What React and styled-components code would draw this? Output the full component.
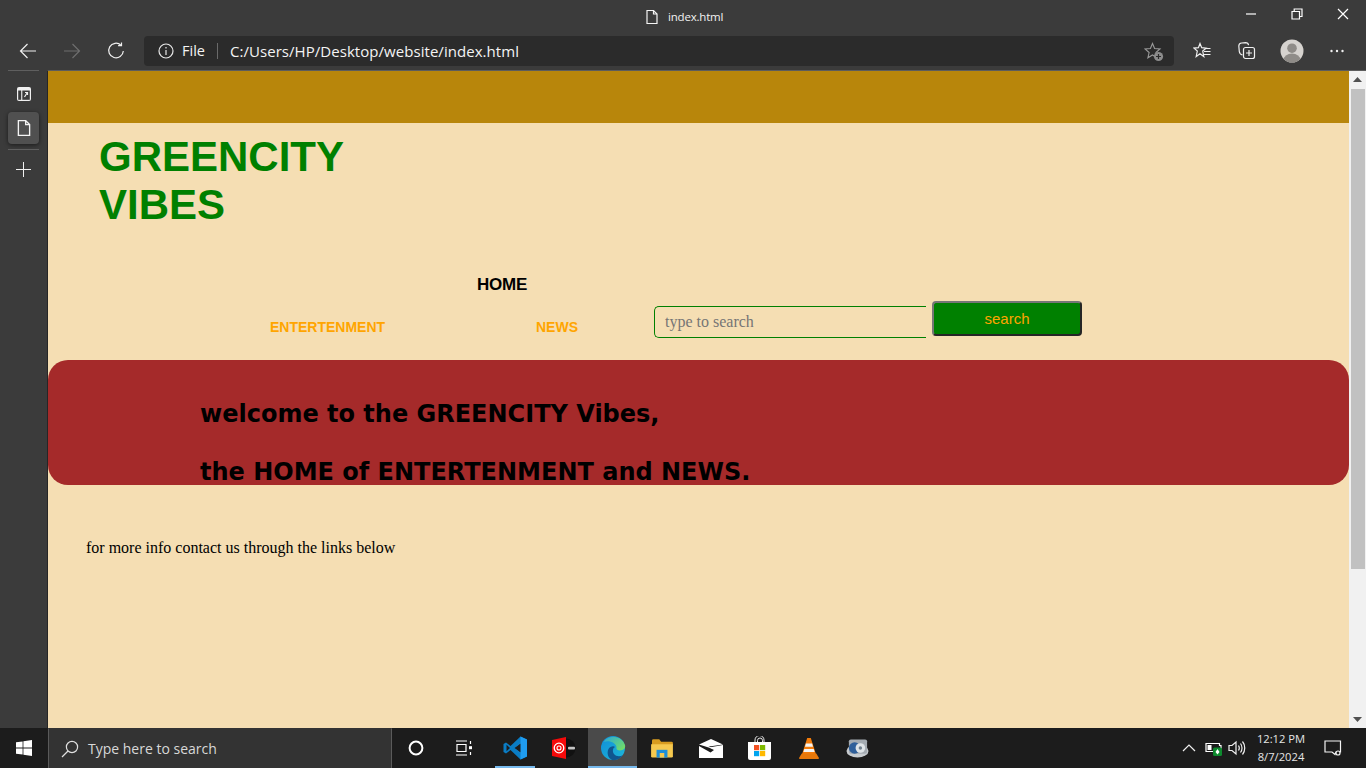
import React from "react";
import styled, { createGlobalStyle } from "styled-components";

const Global = createGlobalStyle`
  html, body { margin: 0; padding: 0; height: 100%; overflow: hidden; }
  #root { height: 100%; }
  * { box-sizing: border-box; }
`;

const Screen = styled.div`
  width: 1366px;
  height: 768px;
  display: flex;
  flex-direction: column;
  background: #3b3b3b;
  font-family: "Open Sans", "Noto Sans", sans-serif;
  color: #fff;
  overflow: hidden;
`;

const TitleBar = styled.div`
  height: 35px;
  flex: none;
  display: flex;
  align-items: center;
  padding-left: 644px;
  background: #3b3b3b;
`;

const TabTitle = styled.div`
  display: flex;
  align-items: center;
  gap: 8px;
  margin-top: -2px;
  font-size: 11.5px;
  letter-spacing: -0.2px;
  color: #f2f2f2;
`;

const WindowButtons = styled.div`
  display: flex;
  margin-left: auto;
  margin-top: -8px;
`;

const WindowButton = styled.div`
  width: 46px;
  height: 27px;
  display: flex;
  align-items: center;
  justify-content: center;
`;

const ToolBar = styled.div`
  height: 35px;
  flex: none;
  display: flex;
  align-items: center;
  padding: 0 0 3px 6px;
`;

const NavIcon = styled.div`
  width: 44px;
  height: 32px;
  display: flex;
  align-items: center;
  justify-content: center;
`;

const AddressBar = styled.div`
  width: 1030px;
  height: 30px;
  margin-left: 6px;
  padding: 0 10px 0 14px;
  display: flex;
  align-items: center;
  border-radius: 4px;
  background: #2b2b2b;
  font-size: 14.5px;
  color: #f4f4f4;
`;

const FileLabel = styled.span`
  margin-left: 8px;
  padding-right: 12px;
  border-right: 1px solid #6a6a6a;
  line-height: 16px;
`;

const Url = styled.span`
  margin-left: 12px;
  font-size: 15px;
  letter-spacing: 0.05px;
`;

const Favorite = styled.div`
  display: flex;
  margin-left: auto;
  margin-top: 2px;
`;

const ToolActions = styled.div`
  display: flex;
  margin-left: 5px;
`;

const ToolAction = styled.div`
  width: 45px;
  height: 30px;
  display: flex;
  align-items: center;
  justify-content: center;
`;

const Middle = styled.div`
  flex: 1;
  min-height: 0;
  display: flex;
`;

const SideBar = styled.div`
  width: 47px;
  flex: none;
  padding: 0 8px;
  display: flex;
  flex-direction: column;
  background: #3b3b3b;
`;

const SideDivider = styled.div`
  width: 31px;
  height: 1px;
  flex: none;
  margin-top: ${(p) => p.$top || 0}px;
  background: #5f5f5f;
`;

const SideButton = styled.div`
  width: 31px;
  height: 32px;
  flex: none;
  margin-top: ${(p) => p.$top}px;
  display: flex;
  align-items: center;
  justify-content: center;
  border-radius: 4px;
  background: ${(p) => (p.$active ? "#505050" : "transparent")};
  box-shadow: ${(p) => (p.$active ? "0 1px 4px rgba(0,0,0,.55)" : "none")};
`;

const Viewport = styled.div`
  flex: 1;
  min-width: 0;
  display: flex;
  border-top: 1px solid #5c5c5c;
  border-left: 1px solid #262626;
`;

const Page = styled.div`
  flex: 1;
  min-width: 0;
  background: #f5deb3;
  color: #000;
  font-family: "Liberation Serif", serif;
  overflow: hidden;
`;

const TopBand = styled.div`
  height: 52px;
  background: #b8860b;
`;

const SiteTitle = styled.h1`
  width: 300px;
  margin: 10px 0 0 51px;
  font-family: "Liberation Sans", Arial, sans-serif;
  font-size: 42px;
  line-height: 48px;
  font-weight: 700;
  color: #008000;
`;

const NavArea = styled.div`
  height: 131px;
  padding-top: 44px;
`;

const HomeLink = styled.div`
  margin-left: 429px;
  height: 24px;
  font-family: "Liberation Sans", Arial, sans-serif;
  font-weight: 700;
  font-size: 17px;
  letter-spacing: -0.2px;
  line-height: 24px;
  color: #000;
`;

const NavRow = styled.div`
  display: flex;
  align-items: flex-start;
  margin-top: 4px;
  padding-left: 222px;
`;

const OrangeLink = styled.div`
  width: ${(p) => p.$w}px;
  margin-top: 18px;
  font-family: "Liberation Sans", Arial, sans-serif;
  font-weight: 700;
  font-size: 14px;
  line-height: 16px;
  color: #ffa500;
`;

const SearchInput = styled.input`
  width: 272px;
  height: 32px;
  margin-top: 5px;
  padding: 0 10px;
  border: 1px solid #008000;
  border-right: none;
  border-radius: 5px 0 0 5px;
  background: transparent;
  font-family: "Liberation Serif", serif;
  font-size: 16px;
  color: #000;
  outline: none;
  &::placeholder { color: #757575; opacity: 1; }
`;

const SearchButton = styled.button`
  width: 150px;
  height: 35px;
  margin-left: 6px;
  padding: 0;
  border: 2px solid;
  border-color: #767676 #262626 #262626 #767676;
  border-radius: 4px;
  background: #008000;
  font-family: "Liberation Sans", Arial, sans-serif;
  font-size: 15px;
  color: #ffa500;
`;

const Banner = styled.div`
  height: 125px;
  padding: 40px 0 0 152px;
  border-radius: 20px;
  background: #a52a2a;
  overflow: hidden;
`;

const BannerLine = styled.h2`
  margin: 0 0 29px;
  height: 29px;
  font-family: "DejaVu Sans", Verdana, sans-serif;
  font-size: 24px;
  line-height: 29px;
  font-weight: 700;
  color: #000;
`;

const InfoText = styled.p`
  margin: 54px 0 0 38px;
  font-size: 16px;
  line-height: 18px;
`;

const ScrollBar = styled.div`
  width: 17px;
  flex: none;
  display: flex;
  flex-direction: column;
  background: #f1f1f1;
`;

const ScrollArrow = styled.div`
  height: 17px;
  flex: none;
  display: flex;
  align-items: center;
  justify-content: center;
`;

const ScrollThumb = styled.div`
  height: 480px;
  margin: 1px 1px 0 2px;
  background: #c1c1c1;
`;

const ScrollSpace = styled.div`
  flex: 1;
`;

const TaskBar = styled.div`
  height: 40px;
  flex: none;
  display: flex;
  align-items: center;
  background: #1c1c1c;
`;

const StartButton = styled.div`
  width: 48px;
  height: 40px;
  display: flex;
  align-items: center;
  justify-content: center;
`;

const SearchBox = styled.div`
  width: 344px;
  height: 40px;
  padding-left: 12px;
  display: flex;
  align-items: center;
  gap: 9px;
  background: #333;
  border: 1px solid #5a5a5a;
  border-bottom: none;
  border-top-color: #333;
  font-size: 14px;
  color: #d8d8d8;
`;

const TaskSlot = styled.div`
  width: 48px;
  height: 40px;
  flex: none;
  display: flex;
  align-items: center;
  justify-content: center;
`;

const AppRow = styled.div`
  display: flex;
  margin-left: 2px;
`;

const AppSlot = styled.div`
  width: 49px;
  height: 40px;
  flex: none;
  display: flex;
  align-items: center;
  justify-content: center;
  background: ${(p) =>
    p.$active
      ? "linear-gradient(#76b9ed, #76b9ed) bottom / 100% 2px no-repeat, #4a4a4a"
      : p.$open
        ? "linear-gradient(#76b9ed, #76b9ed) bottom / 40px 2px no-repeat"
        : "transparent"};
`;

const Tray = styled.div`
  margin-left: auto;
  display: flex;
  align-items: center;
  height: 40px;
`;

const TrayIcon = styled.div`
  width: 24px;
  display: flex;
  justify-content: center;
`;

const Clock = styled.div`
  width: 62px;
  margin: 0 3px 0 1px;
  text-align: center;
  font-size: 11.2px;
  line-height: 18px;
  color: #e6e6e6;
`;

const Notify = styled.div`
  width: 36px;
  margin-right: 15px;
  display: flex;
  justify-content: center;
`;

const stroke = { fill: "none", stroke: "currentColor", strokeWidth: 1.2 };

const PageIcon = ({ size = 16 }) => (
  <svg width={size} height={size} viewBox="0 0 16 16" {...stroke} color="#f4f4f4">
    <path d="M3 1.5h6.5L13 5v9.5H3z" />
    <path d="M9.5 1.5V5H13" />
  </svg>
);

const Minimize = () => (
  <svg width="12" height="12" viewBox="0 0 12 12" {...stroke} color="#fff"><path d="M1 6h10" /></svg>
);
const Restore = () => (
  <svg width="12" height="12" viewBox="0 0 12 12" {...stroke} color="#fff">
    <path d="M1 3.500h7.500V11H1z" /><path d="M3.200 3.500V1H11v7.500H8.500" />
  </svg>
);
const CloseIcon = () => (
  <svg width="12" height="12" viewBox="0 0 12 12" {...stroke} color="#fff"><path d="M1 1l10 10M11 1L1 11" /></svg>
);

const Back = () => (
  <svg width="18" height="16" viewBox="0 0 18 16" {...stroke} color="#f0f0f0"><path d="M17 8H1.500M8.500 1L1.500 8l7 7" /></svg>
);
const Forward = () => (
  <svg width="18" height="16" viewBox="0 0 18 16" {...stroke} color="#6e6e6e"><path d="M1 8h15.500M9.500 1l7 7-7 7" /></svg>
);
const Reload = () => (
  <svg width="18" height="18" viewBox="0 0 18 18" {...stroke} color="#f0f0f0">
    <path d="M14 3.200A7.300 7.300 0 1 0 16.300 9" /><path d="M14.500 0.500v3.200h-3.400" />
  </svg>
);
const Info = () => (
  <svg width="16" height="16" viewBox="0 0 16 16" {...stroke} color="#e8e8e8">
    <circle cx="8" cy="8" r="7" /><path d="M8 7v5M8 4v1.600" />
  </svg>
);
const StarAdd = () => (
  <svg width="20" height="20" viewBox="0 0 20 20">
    <path d="M8.500 1.500l2.100 5 5.400.5-4.100 3.500 1.200 5.300-4.600-2.800-4.600 2.800 1.200-5.300L1 7l5.400-.5z" fill="none" stroke="#9a9a9a" strokeWidth="1.100" />
    <circle cx="14.500" cy="14.500" r="4.600" fill="#8c8c8c" />
    <path d="M14.500 12v5M12 14.500h5" stroke="#2b2b2b" strokeWidth="1.200" />
  </svg>
);
const Favorites = () => (
  <svg width="18" height="18" viewBox="0 0 18 18" {...stroke} color="#f0f0f0">
    <path d="M7 1.500l1.700 4.200 4.400.4-3.400 2.900 1.100 5.500L7 11.700l-3.800 2.800 1.100-5.500L1 6.100l4.400-.4z" />
    <path d="M12 6.500h5.500M11 9.500h6.500M11 12.500h6.500" />
  </svg>
);
const Collections = () => (
  <svg width="18" height="18" viewBox="0 0 18 18" {...stroke} color="#f0f0f0">
    <path d="M4.500 13C2.700 12.500 1.500 11.500 1.300 9.500L.8 4c0-1.800 1-2.800 2.800-3l4-.4c1.500 0 2.700.9 3 2.600" />
    <rect x="5.500" y="5.500" width="11" height="11" rx="2" />
    <path d="M11 8v6M8 11h6" />
  </svg>
);
const Avatar = () => (
  <svg width="24" height="24" viewBox="0 0 24 24">
    <clipPath id="avatar-clip"><circle cx="12" cy="12" r="11.500" /></clipPath>
    <circle cx="12" cy="12" r="11.500" fill="#d6d3cf" />
    <g clipPath="url(#avatar-clip)">
      <circle cx="12" cy="9.200" r="4.800" fill="#8f8c88" />
      <ellipse cx="12" cy="21" rx="8.500" ry="6.500" fill="#8f8c88" />
    </g>
  </svg>
);
const Dots = () => (
  <svg width="16" height="4" viewBox="0 0 16 4" fill="#f0f0f0">
    <circle cx="2.500" cy="2" r="1.200" /><circle cx="8" cy="2" r="1.200" /><circle cx="13.500" cy="2" r="1.200" />
  </svg>
);

const TabsIcon = () => (
  <svg width="16" height="16" viewBox="0 0 16 16">
    <rect x="1" y="1" width="14" height="14" rx="2" fill="#f0f0f0" />
    <rect x="2.200" y="4.500" width="3" height="9.300" fill="#3b3b3b" />
    <rect x="6.300" y="4.500" width="7.500" height="9.300" fill="#3b3b3b" />
    <path d="M8.500 11l2.500-4M9 6.500h2.500V9" stroke="#f0f0f0" strokeWidth="1.200" fill="none" />
  </svg>
);
const Plus = () => (
  <svg width="16" height="16" viewBox="0 0 16 16" stroke="#f0f0f0" strokeWidth="1"><path d="M7.500 0v15M0 7.500h15" /></svg>
);

const ArrowUp = () => (
  <svg width="9" height="5" viewBox="0 0 9 5" fill="#505050"><path d="M4.500 0L9 5H0z" /></svg>
);
const ArrowDown = () => (
  <svg width="9" height="5" viewBox="0 0 9 5" fill="#505050"><path d="M0 0h9L4.500 5z" /></svg>
);

const WinLogo = () => (
  <svg width="16" height="16" viewBox="0 0 16 16" fill="#fff">
    <path d="M0 2.300l6.600-.9v6.200H0zM7.400 1.300L16 0v7.600H7.400zM0 8.400h6.600v6.200L0 13.700zM7.400 8.400H16V16l-8.600-1.300z" />
  </svg>
);
const SearchGlass = () => (
  <svg width="18" height="18" viewBox="0 0 18 18" {...stroke} color="#e0e0e0">
    <circle cx="11" cy="7" r="5.600" /><path d="M7 11L1 17" />
  </svg>
);
const Cortana = () => (
  <svg width="16" height="16" viewBox="0 0 16 16" fill="none" stroke="#fff" strokeWidth="2"><circle cx="8" cy="8" r="6.400" /></svg>
);
const TaskView = () => (
  <svg width="18" height="16" viewBox="0 0 18 16" {...stroke} color="#fff">
    <path d="M1 1h11M1 15h11M2 4.500h9v7H2z" /><path d="M15.500 1v3M15.500 12v3" />
    <rect x="14" y="6.200" width="3" height="3" fill="#fff" stroke="none" />
  </svg>
);
const VSCode = () => (
  <svg width="24" height="24" viewBox="0 0 24 24">
    <path d="M17.500 0.500L24 3.500v17l-6.500 3L7.500 14l-4.500 3.500L.5 16V8l2.500-1.500L7.500 10z" fill="#0a7cc4" />
    <path d="M17.500 0.500L24 3.500v17l-6.500 3V17L11.500 12l6-5z" fill="#1f9cf0" />
    <path d="M3.500 8.800L7 12l-3.500 3.200z" fill="#1c1c1c" />
    <path d="M17.500 7.500v9L11.500 12z" fill="#1c1c1c" />
  </svg>
);
const RedApp = () => (
  <svg width="26" height="24" viewBox="0 0 26 24">
    <circle cx="15" cy="12" r="9.500" fill="#111" />
    <rect x="17" y="10.800" width="7" height="2.600" rx="1" fill="#c4c4c4" />
    <path d="M1 4l14-3v22L1 20z" fill="#f50a0a" />
    <circle cx="8" cy="12" r="4.800" fill="none" stroke="#fff" strokeWidth="1.300" />
    <circle cx="8" cy="12" r="2" fill="none" stroke="#fff" strokeWidth="1.100" />
  </svg>
);
const Edge = () => (
  <svg width="26" height="26" viewBox="0 0 26 26">
    <defs>
      <linearGradient id="edge-a" x1="0" y1="0" x2="1" y2="1">
        <stop offset="0" stopColor="#0f8fd8" /><stop offset="1" stopColor="#1fb6d8" />
      </linearGradient>
      <linearGradient id="edge-b" x1="0" y1="0" x2="1" y2="0.700">
        <stop offset="0" stopColor="#2aa7d8" /><stop offset="1" stopColor="#6fdc6a" />
      </linearGradient>
    </defs>
    <circle cx="13" cy="13" r="12" fill="url(#edge-a)" />
    <path d="M4 7C7 .500 21-.500 25 10c.800 3-1 5.500-5 5.500-3 0-4-1.500-3.500-3C16.500 8 9 5 4 7z" fill="url(#edge-b)" />
    <path d="M12 25c-4-2-5.500-7-3.500-11 1.500-2.500 5-3.500 6.500-2-2 1-3 4-1 7 2 2.500 6 3 9 1-2.500 3.500-7 6-11 5z" fill="#10558f" />
  </svg>
);
const Folder = () => (
  <svg width="22" height="20" viewBox="0 0 24 22">
    <path d="M1 3a1.500 1.500 0 0 1 1.500-1.500H9L11 4h11.500A1.500 1.500 0 0 1 24 5.500V8H1z" fill="#d89c20" />
    <path d="M0 7h24v13a1.500 1.500 0 0 1-1.500 1.500h-21A1.500 1.500 0 0 1 0 20z" fill="#f6c94f" />
    <path d="M6 13h12v8.500H6z" fill="#1e8fd8" />
    <path d="M9.500 16.500h5v5h-5z" fill="#f6c94f" />
  </svg>
);
const Mail = () => (
  <svg width="24" height="19" viewBox="0 0 24 19">
    <path d="M0 5.500L12 0l12 5.500-12 1.800-2.500-.3L16 10.500z" fill="#fff" />
    <path d="M0 7l11.500 6.500L15 11l-5-2.500L24 6v13H0z" fill="#fff" />
  </svg>
);
const Store = () => (
  <svg width="23" height="24" viewBox="0 0 23 24">
    <path d="M7 6.500V4a4.500 4.500 0 0 1 9 0v2.500M9.500 6.500V4.500a2.500 2.500 0 0 1 5 0v2" fill="none" stroke="#e8e8e8" strokeWidth="1" />
    <path d="M0 6h23v16a2 2 0 0 1-2 2H2a2 2 0 0 1-2-2z" fill="#fff" />
    <rect x="6" y="9" width="5.200" height="5.200" fill="#f25022" />
    <rect x="12" y="9" width="5.200" height="5.200" fill="#7fba00" />
    <rect x="6" y="15" width="5.200" height="5.200" fill="#00a4ef" />
    <rect x="12" y="15" width="5.200" height="5.200" fill="#ffb900" />
  </svg>
);
const Vlc = () => (
  <svg width="20" height="24" viewBox="0 0 22 24">
    <path d="M9 1h4l6 19H3z" fill="#f47c0a" />
    <path d="M7.600 7h6.800l1 3.500H6.600zM5.800 13h10.400l1 3.500H4.800z" fill="#f4f4f4" />
    <path d="M3 18h16l3 5a1 1 0 0 1-1 1H1a1 1 0 0 1-1-1z" fill="#e8780a" />
  </svg>
);
const DiscApp = () => (
  <svg width="23" height="22" viewBox="0 0 24 22">
    <ellipse cx="12" cy="14" rx="11.500" ry="7" fill="#c8ccd0" />
    <rect x="3" y="2" width="19" height="15" rx="2" fill="#a4abb2" />
    <circle cx="9" cy="11" r="6" fill="#2f5f9a" />
    <circle cx="15" cy="11" r="5" fill="#dfe4e8" />
    <circle cx="15" cy="11" r="1.800" fill="#70808e" />
  </svg>
);

const Chevron = () => (
  <svg width="14" height="8" viewBox="0 0 14 8" {...stroke} color="#f0f0f0"><path d="M1 7l6-6 6 6" /></svg>
);
const Battery = () => (
  <svg width="17" height="15" viewBox="0 0 17 15">
    <path d="M1 2.500h13.500v2H16v4h-1.500v2H1z" fill="none" stroke="#fff" strokeWidth="1.200" />
    <rect x="2.500" y="4" width="4" height="5" fill="#fff" />
    <rect x="8" y="6.500" width="9" height="8.500" rx="1.500" fill="#0d8a2e" />
    <path d="M12.500 8l2 3-2 2.500-2-2.500z" fill="#fff" />
  </svg>
);
const Speaker = () => (
  <svg width="18" height="16" viewBox="0 0 18 16" {...stroke} color="#f0f0f0">
    <path d="M1 5.500h3L8 2v12l-4-3.500H1z" />
    <path d="M10.500 5.500c1 1.500 1 3.500 0 5M12.500 3.500c2 2.500 2 6.500 0 9M14.500 1.500c3 3.500 3 9.500 0 13" />
  </svg>
);
const NotifyIcon = () => (
  <svg width="18" height="16" viewBox="0 0 18 16" {...stroke} color="#f4f4f4">
    <path d="M1 1h15.500v11H12l-1 2.500L8 12H1z" />
    <circle cx="14" cy="13" r="2" fill="#1c1c1c" />
  </svg>
);

const apps = [
  { key: "code", icon: <VSCode />, open: true },
  { key: "red", icon: <RedApp /> },
  { key: "edge", icon: <Edge />, active: true },
  { key: "folder", icon: <Folder /> },
  { key: "mail", icon: <Mail /> },
  { key: "store", icon: <Store /> },
  { key: "vlc", icon: <Vlc /> },
  { key: "disc", icon: <DiscApp /> },
];

export default function App() {
  return (
    <Screen>
      <Global />
      <TitleBar>
        <TabTitle>
          <PageIcon />
          index.html
        </TabTitle>
        <WindowButtons>
          <WindowButton><Minimize /></WindowButton>
          <WindowButton><Restore /></WindowButton>
          <WindowButton><CloseIcon /></WindowButton>
        </WindowButtons>
      </TitleBar>
      <ToolBar>
        <NavIcon><Back /></NavIcon>
        <NavIcon><Forward /></NavIcon>
        <NavIcon><Reload /></NavIcon>
        <AddressBar>
          <Info />
          <FileLabel>File</FileLabel>
          <Url>C:/Users/HP/Desktop/website/index.html</Url>
          <Favorite><StarAdd /></Favorite>
        </AddressBar>
        <ToolActions>
          <ToolAction><Favorites /></ToolAction>
          <ToolAction><Collections /></ToolAction>
          <ToolAction><Avatar /></ToolAction>
          <ToolAction><Dots /></ToolAction>
        </ToolActions>
      </ToolBar>
      <Middle>
        <SideBar>
          <SideDivider />
          <SideButton $top={7}><TabsIcon /></SideButton>
          <SideButton $top={2} $active><PageIcon size={18} /></SideButton>
          <SideDivider $top={5} />
          <SideButton $top={4}><Plus /></SideButton>
        </SideBar>
        <Viewport>
          <Page>
            <TopBand />
            <SiteTitle>GREENCITY VIBES</SiteTitle>
            <NavArea>
              <HomeLink>HOME</HomeLink>
              <NavRow>
                <OrangeLink $w={266}>ENTERTENMENT</OrangeLink>
                <OrangeLink $w={118}>NEWS</OrangeLink>
                <SearchInput placeholder="type to search" />
                <SearchButton>search</SearchButton>
              </NavRow>
            </NavArea>
            <Banner>
              <BannerLine>welcome to the GREENCITY Vibes,</BannerLine>
              <BannerLine>the HOME of ENTERTENMENT and NEWS.</BannerLine>
            </Banner>
            <InfoText>for more info contact us through the links below</InfoText>
          </Page>
          <ScrollBar>
            <ScrollArrow><ArrowUp /></ScrollArrow>
            <ScrollThumb />
            <ScrollSpace />
            <ScrollArrow><ArrowDown /></ScrollArrow>
          </ScrollBar>
        </Viewport>
      </Middle>
      <TaskBar>
        <StartButton><WinLogo /></StartButton>
        <SearchBox><SearchGlass />Type here to search</SearchBox>
        <TaskSlot><Cortana /></TaskSlot>
        <TaskSlot><TaskView /></TaskSlot>
        <AppRow>
          {apps.map((a) => (
            <AppSlot key={a.key} $open={a.open} $active={a.active}>{a.icon}</AppSlot>
          ))}
        </AppRow>
        <Tray>
          <TrayIcon><Chevron /></TrayIcon>
          <TrayIcon><Battery /></TrayIcon>
          <TrayIcon><Speaker /></TrayIcon>
          <Clock>12:12 PM<br />8/7/2024</Clock>
          <Notify><NotifyIcon /></Notify>
        </Tray>
      </TaskBar>
    </Screen>
  );
}
